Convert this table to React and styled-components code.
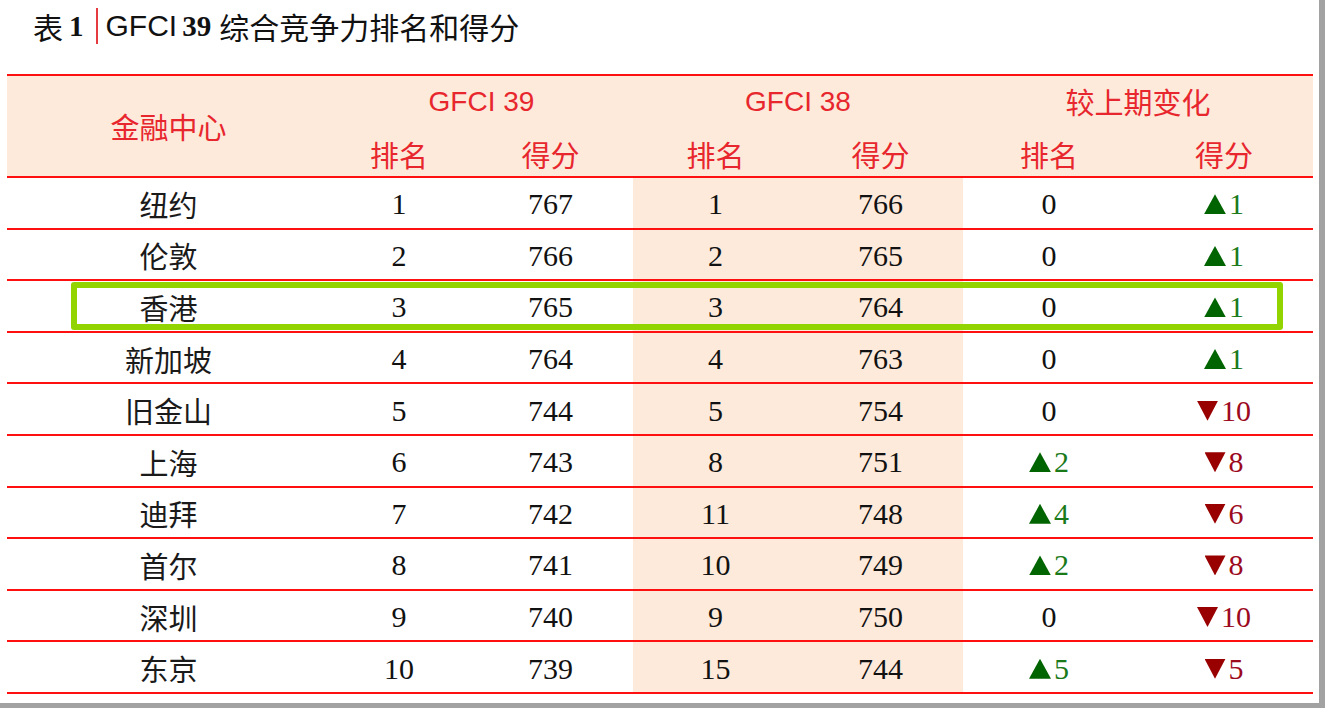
import React from "react";
import styled, { createGlobalStyle } from "styled-components";

const GlobalStyle = createGlobalStyle`
  html, body {
    margin: 0;
    padding: 0;
    background: #a2a2a2;
  }
  body {
    font-family: "Liberation Serif", "Noto Sans CJK SC", serif;
    overflow: hidden;
  }
`;

const rows = [
  { city: "纽约", r39: 1, s39: 767, r38: 1, s38: 766, dr: 0, ds: 1 },
  { city: "伦敦", r39: 2, s39: 766, r38: 2, s38: 765, dr: 0, ds: 1 },
  { city: "香港", r39: 3, s39: 765, r38: 3, s38: 764, dr: 0, ds: 1, mark: true },
  { city: "新加坡", r39: 4, s39: 764, r38: 4, s38: 763, dr: 0, ds: 1 },
  { city: "旧金山", r39: 5, s39: 744, r38: 5, s38: 754, dr: 0, ds: -10 },
  { city: "上海", r39: 6, s39: 743, r38: 8, s38: 751, dr: 2, ds: -8 },
  { city: "迪拜", r39: 7, s39: 742, r38: 11, s38: 748, dr: 4, ds: -6 },
  { city: "首尔", r39: 8, s39: 741, r38: 10, s38: 749, dr: 2, ds: -8 },
  { city: "深圳", r39: 9, s39: 740, r38: 9, s38: 750, dr: 0, ds: -10 },
  { city: "东京", r39: 10, s39: 739, r38: 15, s38: 744, dr: 5, ds: -5 },
];

const Page = styled.div`
  width: 1319px;
  height: 703px;
  background: #fff;
  overflow: hidden;
`;

const TitleHead = styled.div`
  height: 74px;
  padding-top: 8px;
  box-sizing: border-box;
`;

const Title = styled.h1`
  margin: 0;
  padding-left: 33px;
  display: flex;
  align-items: center;
  height: 36px;
  line-height: 36px;
  font-weight: 400;
  font-size: 30px;
  color: #111;
  font-family: "Noto Sans CJK SC", sans-serif;
`;

const SerifBold = styled.span`
  font-family: "Liberation Serif", serif;
  font-weight: 700;
  font-size: 29px;
  margin: 0 ${(p) => p.$gap || 0}px 0 ${(p) => p.$lead || 0}px;
`;

const Sans = styled.span`
  font-family: "Liberation Sans", sans-serif;
  font-size: 30px;
  margin-right: 5px;
`;

const Bar = styled.span`
  display: inline-block;
  width: 2px;
  height: 36px;
  background: #e53a40;
  margin: 0 8px 0 12px;
`;

const Table = styled.table`
  margin-left: 7px;
  width: 1306px;
  border-collapse: collapse;
  table-layout: fixed;
  border-top: 2px solid #ff1010;
`;

const HeadRow = styled.tr`
  height: ${(p) => p.$h}px;
  background: #fdeadb;
`;

const Th = styled.th`
  padding: ${(p) => (p.$sub ? "5px 0 0" : "0")};
  font-weight: 400;
  color: #e8262d;
  font-size: ${(p) => (p.$latin ? 28 : 29)}px;
  font-family: ${(p) =>
    p.$latin
      ? `"Liberation Sans", sans-serif`
      : `"Noto Sans CJK SC", sans-serif`};
  text-align: center;
  vertical-align: middle;
  border-bottom: ${(p) => (p.$line ? "2px solid #ff1010" : "none")};
  line-height: 1;
`;

const BodyRow = styled.tr`
  height: 51.6px;
  border-bottom: 2px solid #ff1010;
`;

const Td = styled.td`
  padding: 3px 0 0;
  text-align: center;
  vertical-align: middle;
  font-size: 30px;
  line-height: 1;
  color: #111;
  background: ${(p) => (p.$shade ? "#fdeadb" : "transparent")};
  font-family: "Liberation Serif", serif;
`;

const CityCell = styled(Td)`
  position: relative;
  font-family: "Noto Sans CJK SC", sans-serif;
  font-size: 29px;
  font-weight: 400;
  color: #1a1a1a;
`;

const Highlight = styled.div`
  position: absolute;
  left: 64px;
  top: 1px;
  width: 1212px;
  height: 48px;
  box-sizing: border-box;
  border: 6px solid #92d400;
  border-radius: 3px;
  pointer-events: none;
`;

const Change = styled.span`
  color: ${(p) => (p.$up ? "#1a7a1a" : "#9c0a1e")};
`;

const Tri = styled.span`
  display: inline-block;
  width: ${(p) => (p.$up ? 22 : 21)}px;
  height: 20px;
  margin-right: 3px;
  background: ${(p) => (p.$up ? "#006400" : "#990000")};
  clip-path: ${(p) =>
    p.$up
      ? "polygon(50% 0, 100% 100%, 0 100%)"
      : "polygon(0 0, 100% 0, 50% 100%)"};
  vertical-align: 0;
`;

function Delta({ v }) {
  if (v === 0) return <>0</>;
  const up = v > 0;
  return (
    <Change $up={up}>
      <Tri $up={up} />
      {Math.abs(v)}
    </Change>
  );
}

export default function App() {
  return (
    <>
      <GlobalStyle />
      <Page>
        <TitleHead>
          <Title>
            表<SerifBold $lead={6}>1</SerifBold>
            <Bar />
            <Sans>GFCI</Sans>
            <SerifBold $gap={8}>39</SerifBold>
            综合竞争力排名和得分
          </Title>
        </TitleHead>
        <Table>
          <colgroup>
            <col style={{ width: 323 }} />
            <col style={{ width: 138 }} />
            <col style={{ width: 165 }} />
            <col style={{ width: 165 }} />
            <col style={{ width: 165 }} />
            <col style={{ width: 172 }} />
            <col style={{ width: 178 }} />
          </colgroup>
          <thead>
            <HeadRow $h={52}>
              <Th rowSpan={2} $line>
                金融中心
              </Th>
              <Th colSpan={2} $latin>
                GFCI 39
              </Th>
              <Th colSpan={2} $latin>
                GFCI 38
              </Th>
              <Th colSpan={2}>较上期变化</Th>
            </HeadRow>
            <HeadRow $h={50}>
              <Th $line $sub>排名</Th>
              <Th $line $sub>得分</Th>
              <Th $line $sub>排名</Th>
              <Th $line $sub>得分</Th>
              <Th $line $sub>排名</Th>
              <Th $line $sub>得分</Th>
            </HeadRow>
          </thead>
          <tbody>
            {rows.map((r) => (
              <BodyRow key={r.city}>
                <CityCell>
                  {r.city}
                  {r.mark && <Highlight />}
                </CityCell>
                <Td>{r.r39}</Td>
                <Td>{r.s39}</Td>
                <Td $shade>{r.r38}</Td>
                <Td $shade>{r.s38}</Td>
                <Td>
                  <Delta v={r.dr} />
                </Td>
                <Td>
                  <Delta v={r.ds} />
                </Td>
              </BodyRow>
            ))}
          </tbody>
        </Table>
      </Page>
    </>
  );
}
